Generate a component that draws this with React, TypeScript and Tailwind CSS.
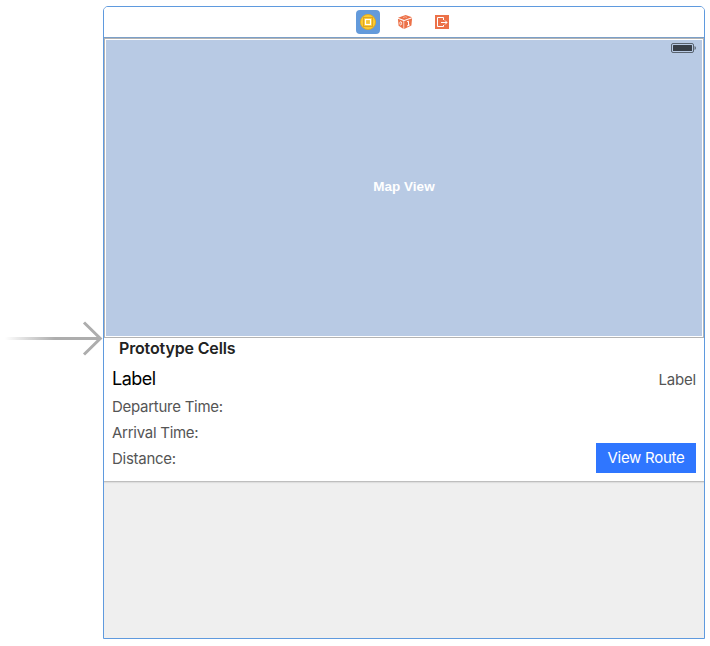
function ViewControllerIcon() {
  return (
    <svg width="16" height="16" viewBox="0 0 16 16">
      <circle cx="8" cy="8" r="7.6" fill="#fccb2f" stroke="#e6a817" strokeWidth="0.8" />
      <rect x="3.5" y="3.5" width="9" height="9" fill="none" stroke="#dfa324" />
      <rect x="5.5" y="5.5" width="5" height="5" fill="#f5c535" stroke="#fff" strokeWidth="1.2" />
    </svg>
  );
}

function FirstResponderIcon() {
  return (
    <svg width="16" height="16" viewBox="0 0 16 16">
      <path d="M1 3.8 8.6 1 15 3.3 7.2 6.1Z" fill="#ec7148" />
      <path d="M.9 4.7 6.5 6.9V15L1.6 11.7Z" fill="#ec7148" />
      <path d="M7.2 6.9 15.1 4.3 14.4 11.6 7.2 15Z" fill="#ec7148" />
      <ellipse cx="3.7" cy="9.3" rx="0.9" ry="1.7" fill="none" stroke="#fff" strokeWidth="0.8" />
      <path d="M10 7.8 11.5 7.2V11.4M10 12 12.8 10.9" fill="none" stroke="#fff" strokeWidth="1" />
      <path d="M6 3.5 8.3 2.8 10 3.4" fill="none" stroke="#fbd9cd" strokeWidth="0.6" />
    </svg>
  );
}

function ExitIcon() {
  return (
    <svg width="14" height="14" viewBox="0 0 14 14">
      <rect width="14" height="14" fill="#ec7148" />
      <path d="M8.5 5V2.5H2.5V11.5H8.5V10" fill="none" stroke="#fff" />
      <path d="M6 7.5H12M10 5.5 12 7.5 10 9.5" fill="none" stroke="#fff" />
    </svg>
  );
}

function EntryArrow() {
  return (
    <svg className="mt-[321px] shrink-0" width="103" height="36" viewBox="0 0 103 36">
      <defs>
        <linearGradient id="entry-fade" x1="5" y1="0" x2="55" y2="0" gradientUnits="userSpaceOnUse">
          <stop offset="0" stopColor="#adadad" stopOpacity="0" />
          <stop offset="1" stopColor="#adadad" />
        </linearGradient>
      </defs>
      <rect x="5" y="16" width="95" height="3" fill="url(#entry-fade)" />
      <path d="M84 1.5 100.3 17.5 84 33.5" fill="none" stroke="#adadad" strokeWidth="3" />
    </svg>
  );
}

function Battery() {
  return (
    <svg width="26" height="10" viewBox="0 0 26 10">
      <rect x="0.5" y="0.5" width="22" height="9" rx="1.5" fill="none" stroke="#59636f" />
      <rect x="2" y="2" width="19" height="6" rx="0.5" fill="#373e47" />
      <path d="M23.6 3C25.2 3.5 25.2 6.5 23.6 7Z" fill="#49525d" />
    </svg>
  );
}

const details = ["Departure Time:", "Arrival Time:", "Distance:"];

export default function App() {
  return (
    <div className="flex h-[646px] w-[710px] overflow-hidden bg-white font-['Inter',sans-serif] whitespace-nowrap">
      <EntryArrow />
      <main className="mt-1.5 flex h-[633px] w-[602px] shrink-0 flex-col overflow-hidden rounded-t-[5px] border border-[#5f9ade] bg-[#efefef]">
        <header className="flex h-[31px] shrink-0 items-center border-b border-[#7b9fc8] bg-white pl-[252px]">
          <div className="flex size-6 items-center justify-center rounded-[4px] bg-[#639adb]">
            <ViewControllerIcon />
          </div>
          <div className="ml-[17px]">
            <FirstResponderIcon />
          </div>
          <div className="ml-[22px]">
            <ExitIcon />
          </div>
        </header>
        <section className="h-[300px] shrink-0 border border-[#b3b3b3] bg-white p-px">
          <div className="flex h-full flex-col bg-[#b8cae4]">
            <div className="flex justify-end pt-[3px] pr-[5px]">
              <Battery />
            </div>
            <div className="mt-[124px] text-center font-['Liberation_Sans',sans-serif] text-[13.5px] leading-5 font-bold text-white">
              Map View
            </div>
          </div>
        </section>
        <section className="flex h-[144px] shrink-0 flex-col border-b border-[#bebebe] bg-white px-2 shadow-[0_1px_1px_#dedede]">
          <h2 className="pl-[7px] text-[16px] leading-5 font-semibold tracking-[-0.15px] text-[#222]">Prototype Cells</h2>
          <div className="mt-[7px] flex h-7 justify-between">
            <span className="text-[18px] leading-[27px] tracking-[-0.5px] text-black">Label</span>
            <span className="text-[15px] leading-[30px] tracking-[-0.2px] text-[#555]">Label</span>
          </div>
          <div className="mt-px flex justify-between">
            <div className="flex flex-col text-[15px] leading-[26px] tracking-[-0.27px] text-[#555]">
              {details.map((label) => (
                <span key={label}>{label}</span>
              ))}
            </div>
            <button className="mt-[49px] h-[30px] w-[100px] bg-[#2f76ff] text-[15px] leading-[30px] tracking-[-0.27px] text-white">
              View Route
            </button>
          </div>
        </section>
      </main>
    </div>
  );
}
